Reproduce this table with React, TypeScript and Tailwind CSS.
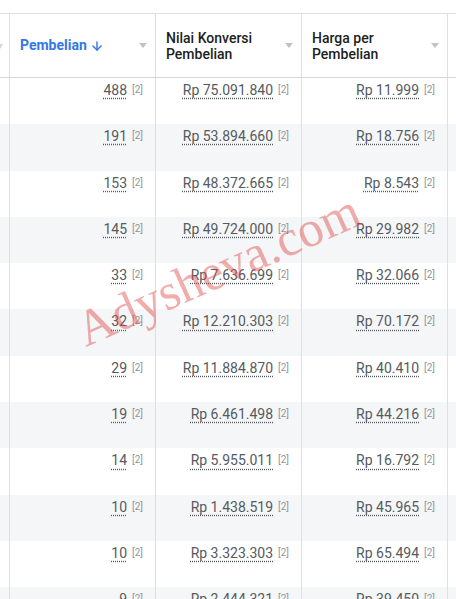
import { ArrowDown } from 'lucide-react';

interface Row {
  count: string;
  value: string;
  cost: string;
}

const rows: Row[] = [
  { count: '488', value: 'Rp 75.091.840', cost: 'Rp 11.999' },
  { count: '191', value: 'Rp 53.894.660', cost: 'Rp 18.756' },
  { count: '153', value: 'Rp 48.372.665', cost: 'Rp 8.543' },
  { count: '145', value: 'Rp 49.724.000', cost: 'Rp 29.982' },
  { count: '33', value: 'Rp 7.636.699', cost: 'Rp 32.066' },
  { count: '32', value: 'Rp 12.210.303', cost: 'Rp 70.172' },
  { count: '29', value: 'Rp 11.884.870', cost: 'Rp 40.410' },
  { count: '19', value: 'Rp 6.461.498', cost: 'Rp 44.216' },
  { count: '14', value: 'Rp 5.955.011', cost: 'Rp 16.792' },
  { count: '10', value: 'Rp 1.438.519', cost: 'Rp 45.965' },
  { count: '10', value: 'Rp 3.323.303', cost: 'Rp 65.494' },
  { count: '9', value: 'Rp 2.444.321', cost: 'Rp 39.450' },
];

function Caret() {
  return (
    <svg width="8" height="5" viewBox="0 0 8 5" className="shrink-0">
      <path d="M0 0 L8 0 L4 5 Z" fill="#bec3c9" />
    </svg>
  );
}

function Cell({ text }: { text: string }) {
  return (
    <div className="w-[146px] shrink-0 border-l border-[#dddfe2] flex justify-end items-start pt-[2px] pr-[12px]">
      <span className="text-[14px] text-[#555a61] underline decoration-dotted decoration-[#555a61] underline-offset-[3px]">
        {text}
      </span>
      <span className="ml-[5px] mt-[2px] text-[10px] text-[#90949c]">[2]</span>
    </div>
  );
}

export default function App() {
  return (
    <div
      className="relative w-[456px] h-[599px] overflow-hidden bg-white"
      style={{ fontFamily: 'Roboto, "Liberation Sans", sans-serif' }}
    >
      <div className="h-[13px]" />

      {/* Header */}
      <div className="flex h-[65px] border-t border-b border-[#dddfe2] border-b-[#d3d6db]">
        <div className="w-[9px] shrink-0 flex items-center">
          <svg width="3" height="5" viewBox="0 0 3 5" className="mt-[2px]">
            <path d="M0 0 L3 0 L0 5 Z" fill="#d3d6db" />
          </svg>
        </div>
        <div className="w-[146px] shrink-0 border-l border-[#dddfe2] flex items-center justify-between pl-[10px] pr-[8px]">
          <span className="flex items-center gap-[3px] text-[14px] font-bold text-[#3578e5]">
            Pembelian
            <ArrowDown size={14} strokeWidth={2.5} />
          </span>
          <Caret />
        </div>
        <div className="w-[146px] shrink-0 border-l border-[#dddfe2] flex items-center justify-between pl-[10px] pr-[8px]">
          <span className="text-[14px] leading-[16px] font-medium text-[#1c1e21]">
            Nilai Konversi
            <br />
            Pembelian
          </span>
          <Caret />
        </div>
        <div className="w-[146px] shrink-0 border-l border-[#dddfe2] flex items-center justify-between pl-[10px] pr-[8px]">
          <span className="text-[14px] leading-[16px] font-medium text-[#1c1e21]">
            Harga per
            <br />
            Pembelian
          </span>
          <Caret />
        </div>
        <div className="flex-1 border-l border-[#dddfe2]" />
      </div>

      {/* Rows */}
      {rows.map((r, i) => (
        <div key={i} className={`flex h-[46.3px] ${i % 2 === 1 ? 'bg-[#f5f6f7]' : 'bg-white'}`}>
          <div className="w-[9px] shrink-0" />
          <Cell text={r.count} />
          <Cell text={r.value} />
          <Cell text={r.cost} />
          <div className="flex-1 border-l border-[#dddfe2]" />
        </div>
      ))}

      {/* Watermark */}
      <span
        className="absolute left-[218px] top-[270px] -translate-x-1/2 -translate-y-1/2 -rotate-24 whitespace-nowrap text-[51px] text-[rgba(225,70,70,0.45)] pointer-events-none"
        style={{ fontFamily: '"Liberation Serif", serif' }}
      >
        Adysheva.com
      </span>
    </div>
  );
}
